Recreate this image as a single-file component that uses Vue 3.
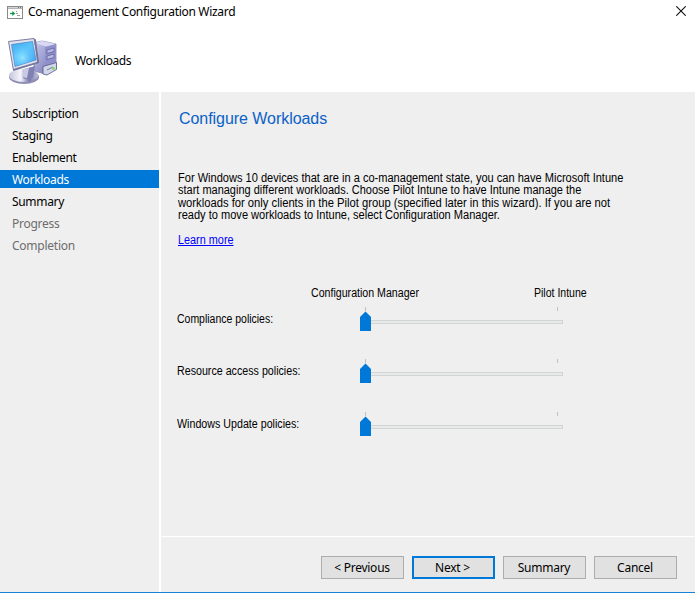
<script setup>
const steps = [
  { name: 'Subscription', state: '' },
  { name: 'Staging', state: '' },
  { name: 'Enablement', state: '' },
  { name: 'Workloads', state: 'active' },
  { name: 'Summary', state: '' },
  { name: 'Progress', state: 'pending' },
  { name: 'Completion', state: 'pending' },
]
const lines = [
  'For Windows 10 devices that are in a co-management state, you can have Microsoft Intune',
  'start managing different workloads. Choose Pilot Intune to have Intune manage the',
  'workloads for only clients in the Pilot group (specified later in this wizard). If you are not',
  'ready to move workloads to Intune, select Configuration Manager.',
]
const policies = ['Compliance policies:', 'Resource access policies:', 'Windows Update policies:']
const buttons = ['< Previous', 'Next >', 'Summary', 'Cancel']
</script>

<template>
  <div class="window">
    <header class="titlebar">
      <svg class="app-icon" width="16" height="13" viewBox="0 0 16 13">
        <rect x=".5" y=".5" width="15" height="12" fill="#fff" stroke="#8a8a8a" />
        <path d="M1 1.5H15" stroke="#d5d5d5" />
        <path d="M1 2.5H15" stroke="#b5b5b5" />
        <path d="M11 1.5h1M13 1.5h1" stroke="#777" />
        <path d="M3 7.500h3" stroke="#159447" stroke-width="1.3" />
        <path d="M5.300 5L8.300 7.500L5.300 10z" fill="#159447" />
        <path d="M9 5.500h1M9 7.500h2M10 9.500h3" stroke="#999" />
      </svg>
      <span class="title">Co-management Configuration Wizard</span>
      <svg class="close" width="10" height="10" viewBox="0 0 10 10">
        <path d="M.3 .3L9.7 9.7M9.7 .3L.3 9.7" stroke="#111" stroke-width="1.1" />
      </svg>
    </header>
    <div class="banner">
      <svg class="computer" width="50" height="50" viewBox="0 0 50 50">
        <defs>
          <linearGradient id="screen" x1="0" y1="0" x2=".7" y2="1">
            <stop offset="0" stop-color="#42a9f0" />
            <stop offset=".5" stop-color="#5bc4fb" />
            <stop offset="1" stop-color="#48a7f4" />
          </linearGradient>
          <radialGradient id="glow" cx=".45" cy=".65" r=".5">
            <stop offset="0" stop-color="#a0efff" stop-opacity=".8" />
            <stop offset="1" stop-color="#60c8ff" stop-opacity="0" />
          </radialGradient>
          <linearGradient id="side" x1="0" y1="0" x2="1" y2="1">
            <stop offset="0" stop-color="#c9c9ef" />
            <stop offset="1" stop-color="#6e6eae" />
          </linearGradient>
          <linearGradient id="base" x1="0" y1="0" x2="1" y2="0">
            <stop offset="0" stop-color="#c4c4dc" />
            <stop offset=".4" stop-color="#f5f5fc" />
            <stop offset=".7" stop-color="#7777aa" />
            <stop offset="1" stop-color="#c2c2dc" />
          </linearGradient>
        </defs>
        <path d="M26 5L34 3L48 6V30L37 36L26 33z" fill="url(#side)" stroke="#8585b3" stroke-width=".8" />
        <path d="M26 5L34 3L48 6L38 8.500z" fill="#d9d9f4" />
        <path d="M37 9L48 6.500V29L37 34z" fill="#8f8fc9" />
        <path d="M39 12L46 10V13.500L39 15.500zM39 18L46 16V19.500L39 21.500z" fill="#b8b8e5" stroke="#6262a1" stroke-width=".8" />
        <path d="M35 28.500L48.500 24.500V31.500L39 37L35 36z" fill="#d1d7e8" stroke="#555786" stroke-width=".8" />
        <path d="M39 32L45 29" stroke="#777c99" stroke-width="1" />
        <circle cx="45.500" cy="30.500" r="1.500" fill="#82da67" />
        <ellipse cx="16" cy="39" rx="15" ry="7" fill="#8e8eb4" />
        <ellipse cx="15.500" cy="37.500" rx="14.500" ry="6.500" fill="url(#base)" />
        <path d="M16 31L27 28L25 39Q21 43 15 40z" fill="#8080b3" />
        <path d="M16 31L21 30L19 40L14 39z" fill="#c9c9e5" />
        <path d="M.5 3.500L26 .5L30.500 24.500L5.500 32.500z" fill="#e2e2ef" stroke="#7d7da5" stroke-width="1" />
        <path d="M26 .5L28 1.500L31 25L5.500 32.500L5 31L29 24z" fill="#74779b" />
        <path d="M3.500 6.500L24.500 3.500L28 22L7 28.500z" fill="url(#screen)" stroke="#397bc0" stroke-width=".6" />
        <path d="M3.500 6.500L24.500 3.500L28 22L7 28.500z" fill="url(#glow)" />
      </svg>
      <span class="banner-title">Workloads</span>
    </div>
    <div class="body">
      <nav class="steps">
        <div v-for="s in steps" :key="s.name" class="step" :class="s.state">{{ s.name }}</div>
      </nav>
      <main class="content">
        <section class="page">
          <h1>Configure Workloads</h1>
          <p class="intro">
            <span v-for="(l, i) in lines" :key="l" class="line narrow" :class="'line-' + i">{{ l }}</span>
          </p>
          <a class="learn narrow">Learn more</a>
          <div class="heads">
            <span class="head-cm narrow">Configuration Manager</span>
            <span class="head-pi narrow">Pilot Intune</span>
          </div>
          <div class="sliders">
            <div v-for="(p, i) in policies" :key="p" class="row">
              <span class="policy narrow" :class="'policy-' + i">{{ p }}</span>
              <svg class="slider" width="204" height="25" viewBox="0 0 204 25" shape-rendering="crispEdges">
                <path d="M5.500 0V4M197.500 0V4" stroke="#c0c0c0" />
                <rect x="1.500" y="13.500" width="201" height="3" fill="#e7eaea" stroke="#d4d4d4" />
                <path d="M0 24V10L5.500 4.500L11 10V24z" fill="#0078d7" shape-rendering="auto" />
              </svg>
            </div>
          </div>
        </section>
        <footer class="actions">
          <button v-for="b in buttons" :key="b" :class="{ primary: b === 'Next >' }">{{ b }}</button>
        </footer>
      </main>
    </div>
  </div>
</template>

<style>
body { margin: 0; }
</style>

<style scoped>
.window { width: 695px; height: 593px; box-sizing: border-box; display: flex; flex-direction: column; background: #fff; border-bottom: 1px solid #1683d8; color: #000; font: 12px/18px "Noto Sans", "Open Sans", sans-serif; white-space: nowrap; overflow: hidden; }
.titlebar { height: 24px; display: flex; align-items: center; padding: 0 9px 0 7px; box-sizing: border-box; }
.app-icon { margin-top: 1px; }
.title { margin-left: 5px; letter-spacing: -.3px; }
.close { margin-left: auto; margin-top: -2px; }
.banner { height: 68px; display: flex; align-items: flex-start; padding: 13px 0 0 8px; box-sizing: border-box; }
.computer { margin-top: 1px; }
.banner-title { margin: 15px 0 0 17px; letter-spacing: -.4px; }
.body { flex: 1; display: flex; min-height: 0; }
.steps { width: 159px; display: flex; flex-direction: column; gap: 4px; padding-top: 12px; box-sizing: border-box; background: #efefef; }
.step { height: 18px; padding: 1px 0 0 12px; box-sizing: border-box; line-height: 18px; letter-spacing: -.32px; }
.active { background: #0078d7; color: #fff; }
.pending { color: #6d6d6d; letter-spacing: -.25px; }
.content { flex: 1; display: flex; flex-direction: column; margin-left: 2px; background: #efefef; }
.page { height: 444px; box-sizing: border-box; padding: 17px 0 0 16px; font-family: "Liberation Sans", Arial, sans-serif; display: flex; flex-direction: column; }
h1 { margin: 0 0 0 2px; font-size: 16px; line-height: 20px; font-weight: 400; color: #0a62c8; letter-spacing: -.05px; }
/* Dialog face: full height with narrowed glyphs */
.narrow { transform: scaleX(.89); transform-origin: 0 50%; }
.intro { margin: 43px 0 0 1px; display: flex; flex-direction: column; }
.line { line-height: 12.4px; align-self: flex-start; }
.line-0 { transform: scaleX(.921); }
.line-1 { transform: scaleX(.915); }
.line-2 { transform: scaleX(.935); }
.line-3 { transform: scaleX(.921); }
.learn { margin: 11px 0 0 1px; align-self: flex-start; color: #00f; text-decoration: underline; line-height: 14px; transform: scaleX(.905); }
.heads { display: flex; margin-top: 39px; line-height: 14px; }
.head-cm { margin-left: 134px; width: 223px; flex: none; transform: scaleX(.885); }
.head-pi { transform: scaleX(.877); }
.sliders { display: flex; flex-direction: column; gap: 27.5px; margin-top: 7px; }
.row { height: 25px; display: flex; }
.policy { width: 183px; line-height: 14px; padding-top: 5px; box-sizing: border-box; }
.policy-0 { transform: scaleX(.873); }
.slider { display: block; }
.actions { flex: 1; border-top: 1px solid #fff; display: flex; gap: 8px; justify-content: flex-end; padding: 19px 18px 0 0; }
button { width: 83px; height: 23px; box-sizing: border-box; padding: 0 1px 0 0; border: 1px solid #adadad; background: #e1e1e1; color: #000; font: 12px/20px "Noto Sans", "Open Sans", sans-serif; letter-spacing: -.25px; border-radius: 0; }
.primary { border: 2px solid #0078d7; line-height: 18px; padding-right: 2px; }
</style>
